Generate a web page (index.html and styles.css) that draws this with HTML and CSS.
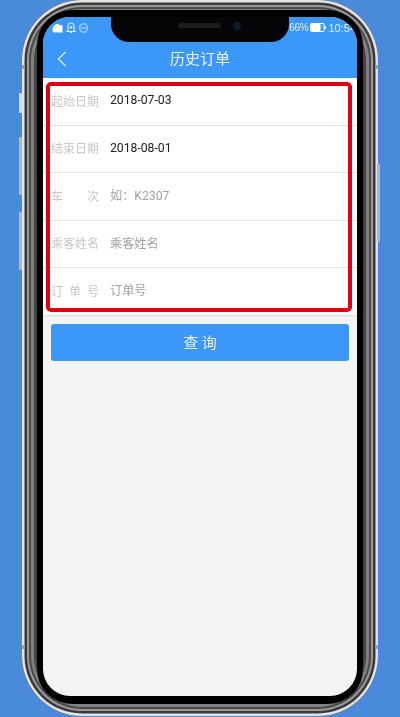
FILE: index.html
```html
<!DOCTYPE html>
<html lang="zh">
<head>
<meta charset="utf-8">
<title>历史订单</title>
<link rel="stylesheet" href="styles.css">
</head>
<body>
<div class="phone">
  <span class="btn btn-mute"></span>
  <span class="btn btn-vol1"></span>
  <span class="btn btn-vol2"></span>
  <span class="btn btn-power"></span>
  <span class="band band-lt"></span>
  <span class="band band-rt"></span>
  <span class="band band-lb"></span>
  <span class="band band-rb"></span>
  <div class="rim">
    <div class="bezel">
      <div class="screen">
        <header class="head">
          <div class="status">
            <div class="status-left">
              <svg class="ico" width="11" height="10" viewBox="0 0 11 10"><path d="M.5 6.500C.5 4 2.500 1.500 5.500.8 7 2 9 2.500 10.500 2.200V9.500H2C1 9 .5 8 .5 6.500z" fill="#fff"/></svg>
              <svg class="ico" width="10" height="12" viewBox="0 0 10 12"><path d="M5 1C2.800 1 2 3 2 5v3L1 9.500h8L8 8V5C8 3 7.200 1 5 1z" fill="none" stroke="#e6f1fe" stroke-width="1.100"/><circle cx="5" cy="5.500" r="1.300" fill="#e6f1fe"/><path d="M4 10.500h2" stroke="#e6f1fe"/></svg>
              <svg class="ico" width="9" height="10" viewBox="0 0 9 10"><ellipse cx="4.500" cy="5" rx="3.800" ry="4.200" fill="none" stroke="#d8e8fc" stroke-width="1"/><path d="M2.500 5h4" stroke="#d8e8fc"/></svg>
            </div>
            <div class="status-right">
              <span class="pct">66%</span>
              <svg class="ico" width="16" height="9" viewBox="0 0 16 9"><rect x=".5" y=".5" width="13.500" height="8" rx="1" fill="none" stroke="#fff"/><rect x="1" y="1" width="9.500" height="7" fill="#fff"/><rect x="14.500" y="3" width="1.500" height="3" fill="#fff"/></svg>
              <span>10:54</span>
            </div>
          </div>
          <div class="nav">
            <svg class="back" width="10" height="16" viewBox="0 0 10 16"><path d="M8.500 1L1.500 8l7 7" fill="none" stroke="#dcebff" stroke-width="1.400"/></svg>
            <h1 class="title">历史订单</h1>
          </div>
        </header>
        <form class="form">
          <div class="row"><span class="label">起始日期</span><span class="value">2018-07-03</span></div>
          <div class="row"><span class="label">结束日期</span><span class="value">2018-08-01</span></div>
          <div class="row"><span class="label label-wide">车<i>次</i></span><span class="value hint">如：K2307</span></div>
          <div class="row"><span class="label">乘客姓名</span><span class="value hint">乘客姓名</span></div>
          <div class="row"><span class="label label-wide">订<i>单</i><i>号</i></span><span class="value hint">订单号</span></div>
          <div class="highlight"></div>
        </form>
        <button class="submit" type="button">查 询</button>
      </div>
      <div class="notch"><span class="speaker"></span><span class="camera"></span></div>
    </div>
  </div>
</div>
</body>
</html>
```
FILE: styles.css
```css
* { box-sizing: border-box; }
html, body { margin: 0; height: 717px; overflow: hidden; }
body { background: #4a8adb; font-family: "Noto Sans CJK SC", "Liberation Sans", sans-serif; padding: 0 22px 1px; }
.phone { position: relative; height: 716px; filter: blur(.45px); }
.btn { position: absolute; left: -3px; width: 3px; background: #b4b8bc; border-radius: 1px; }
.btn-mute { top: 93px; height: 20px; background: #d4d6d8; }
.btn-vol1 { top: 137px; height: 58px; }
.btn-vol2 { top: 212px; height: 58px; }
.btn-power { left: auto; right: -2px; top: 164px; height: 78px; }
.band { position: absolute; width: 3px; height: 4px; background: #9aa3ad; z-index: 2; }
.band-lt { left: 0; top: 65px; }
.band-rt { right: 0; top: 65px; }
.band-lb { left: 0; top: 645px; }
.band-rb { right: 0; top: 645px; }
.rim {
  height: 100%;
  padding: 10px 15px 12px;
  border-radius: 60px;
  background: #777;
  box-shadow:
    inset 0 0 0 2.500px #e2e3e4,
    inset 0 0 0 5px #3a3a3a,
    inset 0 0 0 7px #999,
    inset 0 0 0 9px #4a4a4a,
    inset 0 0 0 12px #808080,
    inset 0 0 0 15px #444;
}
.bezel {
  position: relative;
  height: 100%;
  padding: 7px 6px 8px;
  border-radius: 35px;
  background: #000;
}
.screen {
  height: 100%;
  border-radius: 27px;
  overflow: hidden;
  background: #f3f3f3;
}
.head { background: #3c98f8; height: 61px; color: #fff; }
.status { display: flex; justify-content: space-between; align-items: center; height: 21px; padding: 0 1px 0 9px; font-size: 11px; color: #e4effd; font-family: "Liberation Sans", sans-serif; }
.status-left, .status-right { display: flex; align-items: center; gap: 3px; }
.status-right { gap: 2px; }
.pct { font-size: 10px; letter-spacing: -.3px; }
.ico { display: block; }
.nav { position: relative; height: 40px; display: flex; align-items: center; justify-content: center; padding-bottom: 2px; }
.back { position: absolute; left: 14px; top: 13px; }
.title { margin: 0; font-size: 15px; font-weight: 400; color: #eaf3ff; }
.form { position: relative; background: #fff; }
.row { display: flex; align-items: center; height: 47.500px; padding: 0 0 2px 8px; border-bottom: 1px solid #dfdfdf; font-size: 12px; }
.label { width: 59px; color: #c6c6c6; white-space: nowrap; }
.label-wide { display: flex; justify-content: space-between; width: 48px; margin-right: 11px; }
.label i { font-style: normal; }
.value { color: #222; font-family: Roboto, "Noto Sans CJK SC", sans-serif; font-size: 12.200px; }
.hint { color: #a0a0a0; }
.highlight { position: absolute; left: 3px; top: 4px; width: 306px; height: 230px; border: 4px solid #dc0010; border-radius: 5px; }
.submit {
  display: block;
  width: 298px;
  height: 37px;
  margin: 8.500px 0 0 8px;
  padding: 0 0 2px;
  border: 0;
  border-radius: 3px;
  background: #3c98f8;
  color: #eaf3ff;
  font: 400 15px "Noto Sans CJK SC", sans-serif;
}
.notch {
  position: absolute;
  left: 74px;
  top: 7px;
  width: 178px;
  height: 25px;
  background: #050508;
  border-radius: 0 0 18px 18px;
  display: flex;
  align-items: center;
  padding: 0 0 8px 67px;
}
.speaker { width: 43px; height: 5px; border-radius: 3px; background: #1c1c1f; }
.camera { width: 8px; height: 8px; margin-left: 12px; border-radius: 50%; background: #10182c; }
```
